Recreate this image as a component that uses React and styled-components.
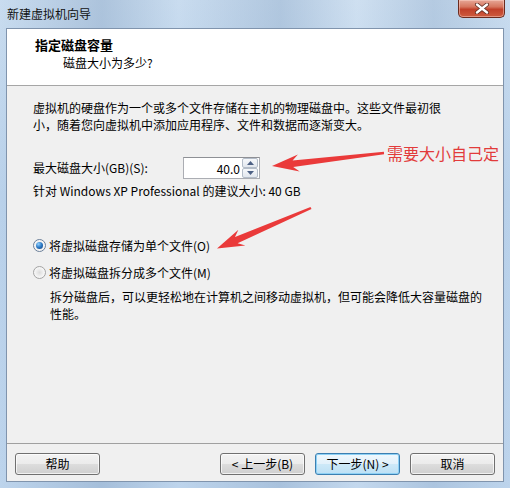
import styled, { createGlobalStyle } from "styled-components";

const GlobalStyle = createGlobalStyle`
  html, body {
    margin: 0;
    padding: 0;
    background: #ffffff;
  }
  body {
    font-family: "Noto Sans CJK SC", "Noto Sans", sans-serif;
    font-size: 12px;
    color: #000;
  }
`;

export default function App() {
  return (
    <>
      <GlobalStyle />
      <Window>
        <TitleBar>
          <TitleText>新建虚拟机向导</TitleText>
          <CloseButton>
            <svg width="16" height="11" viewBox="0 0 16 11">
              <path d="M3 1.5 L13 9.5 M13 1.5 L3 9.5" stroke="#5a2a20" strokeWidth="4" strokeLinecap="round" />
              <path d="M3 1.5 L13 9.5 M13 1.5 L3 9.5" stroke="#ffffff" strokeWidth="2.4" strokeLinecap="round" />
            </svg>
          </CloseButton>
        </TitleBar>
        <Client>
          <Header>
            <HeaderTitle>指定磁盘容量</HeaderTitle>
            <HeaderSub>磁盘大小为多少?</HeaderSub>
          </Header>
          <Body>
            <Paragraph>
              虚拟机的硬盘作为一个或多个文件存储在主机的物理磁盘中。这些文件最初很
              <br />
              小，随着您向虚拟机中添加应用程序、文件和数据而逐渐变大。
            </Paragraph>
            <SizeRow>
              <Label>最大磁盘大小(GB)(S):</Label>
              <SpinBox>
                <SpinValue>40.0</SpinValue>
                <SpinButtons>
                  <SpinButton>
                    <svg width="7" height="4" viewBox="0 0 7 4"><path d="M0 4 L3.5 0 L7 4 Z" fill="#4d6185" /></svg>
                  </SpinButton>
                  <SpinButton>
                    <svg width="7" height="4" viewBox="0 0 7 4"><path d="M0 0 L3.5 4 L7 0 Z" fill="#4d6185" /></svg>
                  </SpinButton>
                </SpinButtons>
              </SpinBox>
            </SizeRow>
            <Hint>针对 Windows XP Professional 的建议大小: 40 GB</Hint>
            <RadioRow $first>
              <Radio $checked />
              <span>将虚拟磁盘存储为单个文件(O)</span>
            </RadioRow>
            <RadioRow>
              <Radio />
              <span>将虚拟磁盘拆分成多个文件(M)</span>
            </RadioRow>
            <Description>
              拆分磁盘后，可以更轻松地在计算机之间移动虚拟机，但可能会降低大容量磁盘的
              <br />
              性能。
            </Description>
          </Body>
          <Footer>
            <Button>帮助</Button>
            <Spacer />
            <Button>&lt; 上一步(B)</Button>
            <Button $focused>下一步(N) &gt;</Button>
            <Button>取消</Button>
          </Footer>
        </Client>
        <Note>需要大小自己定</Note>
        <Arrows width="510" height="488" viewBox="0 0 510 488">
          <polygon
            points="384.1,154.3 293.2,166.9 299.7,171.4 272,166 297.9,154.6 292.6,160.5 383.9,151.7"
            fill="#ea3a3a"
          />
          <polygon
            points="311.5,209 237.6,243.2 245.4,245.5 217,248.5 238.4,229.8 235.0,237.0 310.5,207"
            fill="#ea3a3a"
          />
        </Arrows>
      </Window>
    </>
  );
}

const Window = styled.div`
  position: relative;
  width: 510px;
  height: 488px;
  box-sizing: border-box;
  padding: 0 6px 6px 6px;
  display: flex;
  flex-direction: column;
  background:
    linear-gradient(90deg, rgba(255,255,255,0) 0%, rgba(120,150,185,0.35) 20%, rgba(255,255,255,0) 35%, rgba(120,150,185,0.3) 55%, rgba(255,255,255,0.1) 70%, rgba(120,150,185,0.25) 85%, rgba(255,255,255,0) 100%),
    linear-gradient(180deg, #c9dcef 0%, #b9d1ea 40%, #bdd4ec 100%);
  overflow: hidden;
`;

const TitleBar = styled.div`
  height: 28px;
  display: flex;
  justify-content: space-between;
  align-items: flex-start;
`;

const TitleText = styled.div`
  margin-top: 6px;
  margin-left: 1px;
  font-size: 12px;
  line-height: 16px;
  color: #111;
`;

const CloseButton = styled.div`
  width: 47px;
  height: 18px;
  margin-right: -1px;
  box-sizing: border-box;
  border: 1px solid #6b2b1f;
  border-top: none;
  border-radius: 0 0 5px 5px;
  background: linear-gradient(180deg, #e7a797 0%, #d6765f 40%, #c1402a 55%, #cd5b3f 100%);
  display: flex;
  align-items: center;
  justify-content: center;
  box-shadow: inset 0 0 0 1px rgba(255, 220, 210, 0.45);
`;

const Client = styled.div`
  flex: 1;
  display: flex;
  flex-direction: column;
  border: 1px solid #8094ad;
  background: #f0f0f0;
`;

const Header = styled.div`
  height: 56px;
  background: #ffffff;
  border-bottom: 1px solid #a6a6a6;
  padding-left: 28px;
  display: flex;
  flex-direction: column;
`;

const HeaderTitle = styled.div`
  margin-top: 8px;
  font-size: 13px;
  line-height: 16px;
  font-weight: 700;
`;

const HeaderSub = styled.div`
  margin-top: 2px;
  padding-left: 28px;
  line-height: 16px;
`;

const Body = styled.div`
  flex: 1;
  padding: 13px 0 0 26px;
  display: flex;
  flex-direction: column;
`;

const Paragraph = styled.div`
  line-height: 17px;
`;

const SizeRow = styled.div`
  margin-top: 24px;
  display: flex;
  align-items: center;
`;

const Label = styled.div`
  width: 150px;
  line-height: 16px;
`;

const SpinBox = styled.div`
  width: 77px;
  height: 22px;
  box-sizing: border-box;
  border: 1px solid #abadb3;
  border-top-color: #8e9095;
  background: #ffffff;
  display: flex;
  align-items: center;
`;

const SpinValue = styled.div`
  flex: 1;
  text-align: right;
  padding-right: 2px;
  font-size: 12px;
`;

const SpinButtons = styled.div`
  width: 16px;
  height: 20px;
  display: flex;
  flex-direction: column;
  margin-right: 1px;
`;

const SpinButton = styled.div`
  flex: 1;
  box-sizing: border-box;
  border: 1px solid #b4bdc9;
  border-radius: 2px;
  background: linear-gradient(180deg, #f6f8fb 0%, #e2e7ee 100%);
  display: flex;
  align-items: center;
  justify-content: center;
`;

const Hint = styled.div`
  margin-top: 4px;
  line-height: 15px;
`;

const RadioRow = styled.div`
  margin-top: ${(p) => (p.$first ? "39px" : "11px")};
  height: 16px;
  display: flex;
  align-items: center;
  gap: 3px;
`;

const Radio = styled.span`
  width: 13px;
  height: 13px;
  box-sizing: border-box;
  border-radius: 50%;
  border: 1px solid ${(p) => (p.$checked ? "#6b7f99" : "#a3a3a3")};
  background: radial-gradient(circle at 50% 50%, #dcdcdc 0%, #f3f3f3 55%, #ffffff 100%);
  position: relative;
  &::after {
    content: "";
    display: ${(p) => (p.$checked ? "block" : "none")};
    position: absolute;
    left: 2px;
    top: 2px;
    width: 7px;
    height: 7px;
    border-radius: 50%;
    background: radial-gradient(circle at 35% 30%, #8fd0ff 0%, #2b78c4 50%, #153f78 100%);
  }
`;

const Description = styled.div`
  margin-top: 8px;
  padding-left: 17px;
  line-height: 17px;
`;

const Footer = styled.div`
  border-top: 1px solid #a0a0a0;
  padding: 9px 8px 6px 8px;
  display: flex;
  gap: 10px;
`;

const Spacer = styled.div`
  flex: 1;
`;

const Button = styled.div`
  width: 85px;
  height: 22px;
  box-sizing: border-box;
  border: 1px solid ${(p) => (p.$focused ? "#3c7fb1" : "#707070")};
  border-radius: 3px;
  background: ${(p) =>
    p.$focused
      ? "linear-gradient(180deg, #f0f8fd 0%, #e2f1fb 50%, #cde9f8 51%, #bde0f5 100%)"
      : "linear-gradient(180deg, #f3f3f3 0%, #ebebeb 50%, #dddddd 51%, #cfcfcf 100%)"};
  box-shadow: inset 0 0 0 1px ${(p) => (p.$focused ? "#8ed1f5" : "rgba(255,255,255,0.7)")};
  display: flex;
  align-items: center;
  justify-content: center;
  font-size: 12px;
  line-height: 16px;
`;

const Note = styled.div`
  position: absolute;
  left: 387px;
  top: 143px;
  font-size: 16px;
  line-height: 20px;
  color: #e23b3b;
`;

const Arrows = styled.svg`
  position: absolute;
  left: 0;
  top: 0;
  pointer-events: none;
`;
